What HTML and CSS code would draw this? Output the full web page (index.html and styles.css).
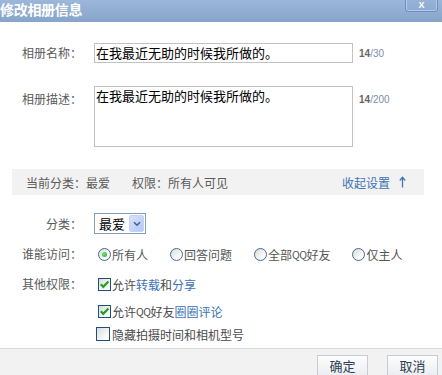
FILE: index.html
```html
<!DOCTYPE html>
<html lang="zh-CN">
<head>
<meta charset="utf-8">
<title>修改相册信息</title>
<link rel="stylesheet" href="styles.css">
</head>
<body>
<div class="dialog">
  <div class="header">
    <span class="title">修改相册信息</span>
    <span class="close">X</span>
  </div>

  <div class="form">
    <div class="row row-name">
      <span class="label">相册名称：</span>
      <div class="input">在我最近无助的时候我所做的。</div>
      <span class="count"><b>14</b>/30</span>
    </div>

    <div class="row row-desc">
      <span class="label">相册描述：</span>
      <div class="textarea">在我最近无助的时候我所做的。</div>
      <span class="count"><b>14</b>/200</span>
    </div>

    <div class="bar">
      <span class="bar-item">当前分类：最爱</span>
      <span class="bar-item">权限：所有人可见</span>
      <span class="collapse">收起设置
        <svg class="arrow" width="7" height="12" viewBox="0 0 7 12"><path d="M3.5 1.5V11.5M0.8 4.5L3.5 1.2L6.2 4.5" fill="none" stroke="#3f74b5" stroke-width="1.3"/></svg>
      </span>
    </div>

    <div class="row row-select">
      <span class="label">分类：</span>
      <div class="select">
        <span class="select-text">最爱</span>
        <span class="select-btn">
          <svg width="8" height="6" viewBox="0 0 8 6"><path d="M1 1.2L4 4.2L7 1.2" fill="none" stroke="#4d6185" stroke-width="1.6"/></svg>
        </span>
      </div>
    </div>

    <div class="row row-radio">
      <span class="label">谁能访问：</span>
      <div class="radios">
        <span class="radio-item"><span class="radio checked"></span>所有人</span>
        <span class="radio-item"><span class="radio"></span>回答问题</span>
        <span class="radio-item"><span class="radio"></span>全部<span class="qq">QQ</span>好友</span>
        <span class="radio-item"><span class="radio"></span>仅主人</span>
      </div>
    </div>

    <div class="row row-check1">
      <span class="label">其他权限：</span>
      <span class="check-item"><span class="checkbox checked"><svg width="11" height="11" viewBox="0 0 11 11"><path d="M1.8 5.2L4.3 7.8L9.4 2.4" fill="none" stroke="#23a023" stroke-width="2.2"/></svg></span>允许<a class="link">转载</a>和<a class="link">分享</a></span>
    </div>

    <div class="row row-check2">
      <span class="label"></span>
      <span class="check-item"><span class="checkbox checked"><svg width="11" height="11" viewBox="0 0 11 11"><path d="M1.8 5.2L4.3 7.8L9.4 2.4" fill="none" stroke="#23a023" stroke-width="2.2"/></svg></span>允许<span class="qq">QQ</span>好友<a class="link">圈圈评论</a></span>
    </div>

    <div class="row row-check3">
      <span class="label"></span>
      <span class="check-item unchecked"><span class="checkbox big"></span>隐藏拍摄时间和相机型号</span>
    </div>
  </div>

  <div class="footer">
    <span class="btn">确定</span>
    <span class="btn">取消</span>
  </div>
</div>
</body>
</html>
```

FILE: styles.css
```css
* { box-sizing: border-box; }
html, body { margin: 0; padding: 0; background: #fff; }
body {
  font-family: "Noto Sans CJK SC", "Noto Sans", sans-serif;
  font-size: 12px;
  color: #555;
}
.dialog {
  width: 442px;
  height: 375px;
  overflow: hidden;
  display: flex;
  flex-direction: column;
  background: #fff;
}
.header {
  height: 22px;
  flex: none;
  display: flex;
  align-items: flex-start;
  background: linear-gradient(#9cb7d9, #87a4ca);
}
.title {
  color: #fff;
  font-weight: bold;
  font-size: 14px;
  line-height: 19px;
  letter-spacing: -0.3px;
}
.close {
  margin-left: auto;
  margin-right: 4px;
  margin-top: -11px;
  width: 33px;
  height: 23px;
  border: 1px solid #6b8fbf;
  border-radius: 3px;
  box-shadow: inset 0 0 0 1px #b5cae3;
  background: linear-gradient(#9fbadb, #8eaad0);
  color: #fff;
  font-family: "Liberation Sans", sans-serif;
  font-size: 9px;
  font-weight: bold;
  text-align: center;
  line-height: 9px;
  padding-top: 11px;
}
.form { padding-top: 21px; }
.row { display: flex; align-items: center; }
.label {
  width: 82px;
  flex: none;
  text-align: right;
  margin-right: 12px;
  color: #595959;
  line-height: 14px;
}
.row-name { height: 20px; }
.input {
  width: 259px;
  height: 20px;
  border: 1px solid #c2c2c2;
  color: #000;
  font-size: 13px;
  line-height: 18px;
  padding-left: 1px;
  white-space: nowrap;
}
.count {
  margin-left: 6px;
  font-family: "Liberation Sans", sans-serif;
  font-size: 10px;
  color: #7d8fa5;
}
.count b { color: #666; }
.row-desc {
  margin-top: 23px;
  align-items: flex-start;
}
.row-desc .label { padding-top: 6px; }
.row-desc .count { padding-top: 8px; }
.textarea {
  width: 259px;
  height: 61px;
  border: 1px solid #c2c2c2;
  color: #000;
  font-size: 13px;
  line-height: 16px;
  padding: 1px 0 0 1px;
}
.bar {
  margin: 22px 18px 0 12px;
  height: 26px;
  background: #f2f2f2;
  display: flex;
  align-items: center;
  padding: 0 18px 0 14px;
  gap: 22px;
  color: #5a5a5a;
}
.collapse {
  margin-left: auto;
  color: #3f74b5;
  display: flex;
  align-items: center;
  gap: 9px;
}
.row-select { margin-top: 18px; height: 21px; }
.select {
  width: 52px;
  height: 21px;
  border: 1px solid #7f9db9;
  display: flex;
  align-items: center;
  padding: 0 1px 0 4px;
}
.select-text {
  color: #000;
  font-size: 13px;
  line-height: 19px;
}
.select-btn {
  margin-left: auto;
  width: 15px;
  height: 17px;
  background: linear-gradient(135deg, #d6e2fc, #b4c9f5);
  border: 1px solid #c3d3f5;
  border-radius: 2px;
  display: flex;
  align-items: center;
  justify-content: center;
}
.row-radio { margin-top: 13px; height: 14px; }
.radios { display: flex; align-items: center; padding-left: 4px; gap: 22px; }
.radio-item { display: flex; align-items: center; color: #555; }
.qq { font-size: 10.5px; letter-spacing: -0.6px; }
.radio {
  width: 13px;
  height: 13px;
  border: 1px solid #41699a;
  border-radius: 50%;
  background: linear-gradient(135deg, #dcdcd5, #fafafa 70%);
  margin-right: 1px;
  position: relative;
}
.radio.checked::after {
  content: "";
  position: absolute;
  left: 3px;
  top: 3px;
  width: 5px;
  height: 5px;
  border-radius: 50%;
  background: radial-gradient(circle at 40% 40%, #7ee07e, #22a322);
}
.row-check1 { margin-top: 16px; height: 14px; }
.row-check2 { margin-top: 13px; height: 14px; }
.row-check3 { margin-top: 9px; height: 14px; }
.check-item {
  display: flex;
  align-items: center;
  padding-left: 4px;
  color: #4a4a4a;
}
.check-item.unchecked { padding-left: 2px; }
.checkbox {
  width: 13px;
  height: 13px;
  border: 1px solid #1c4f7e;
  background: linear-gradient(135deg, #dcdcd5, #fbfbfb 75%);
  display: flex;
  align-items: center;
  justify-content: center;
  margin-right: 1px;
}
.checkbox.big { width: 14px; height: 14px; margin-right: 2px; }
.link { color: #3c72b4; text-decoration: none; }
.footer {
  margin-top: auto;
  height: 27px;
  flex: none;
  border-top: 1px solid #dadada;
  background: #f2f2f2;
  display: flex;
  justify-content: flex-end;
  padding: 6px 4px 0 0;
  gap: 19px;
}
.btn {
  width: 51px;
  height: 24px;
  border: 1px solid #c6ccd4;
  background: linear-gradient(#fdfdfd, #e8ebef);
  color: #2f3e52;
  font-size: 13px;
  text-align: center;
  line-height: 20px;
}
```
